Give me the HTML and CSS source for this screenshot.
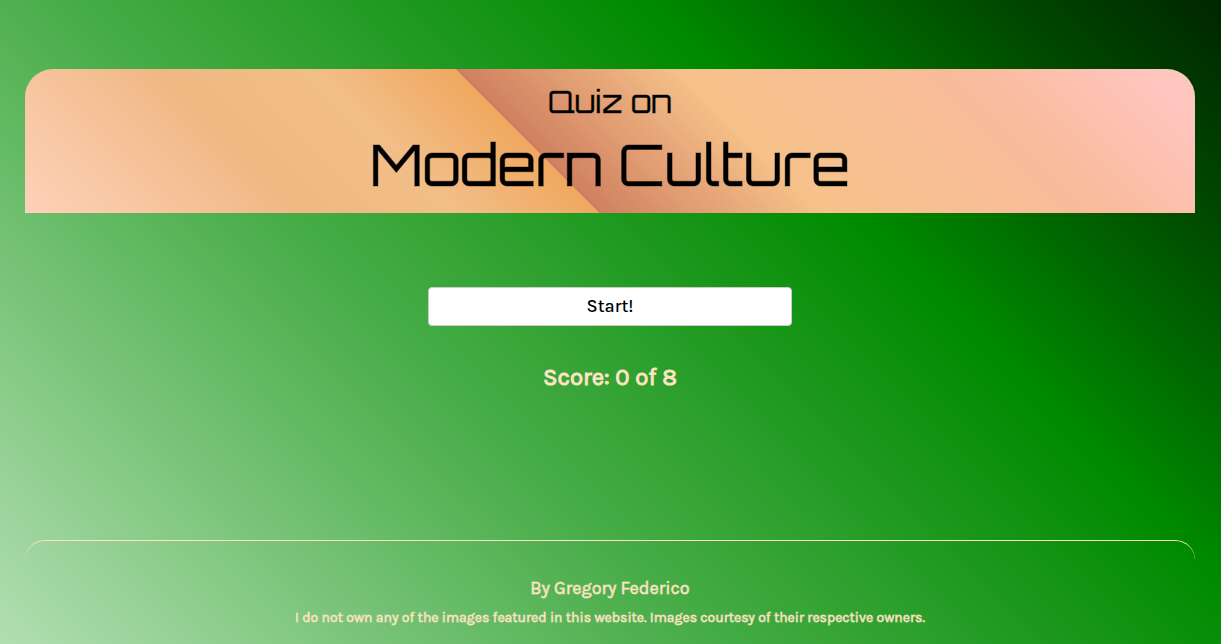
FILE: index.html
```html
<!DOCTYPE html>
<html lang="en">
<head>
<meta charset="utf-8">
<meta name="viewport" content="width=device-width, initial-scale=1">
<title>Quiz on Modern Culture</title>
<link rel="stylesheet" href="styles.css">
</head>
<body class="page">
<header class="banner">
<h1 class="title"><span class="title-lead">Quiz on</span><span class="title-main">Modern Culture</span></h1>
</header>
<main class="quiz">
<button class="start" type="button">Start!</button>
<p class="score">Score: 0 of 8</p>
</main>
<footer class="credits">
<p class="author">By Gregory Federico</p>
<p class="notice">I do not own any of the images featured in this website. Images courtesy of their respective owners.</p>
</footer>
</body>
</html>
```
FILE: styles.css
```css
* {
  box-sizing: border-box;
}

.page {
  display: flex;
  flex-direction: column;
  min-height: 100vh;
  margin: 0;
  padding: 69px 26px 16px 25px;
  background: linear-gradient(45deg, #b2deb2 0%, #4caf4c 36%, #008a00 69%, #004800 88%, #002600 100%);
  color: bisque;
  font-family: Karla, "Liberation Sans", sans-serif;
  font-weight: 400;
  text-align: center;
}

.banner {
  padding: 15px 16px 10px;
  border-radius: 28px 28px 0 0;
  background: linear-gradient(45deg, #ffd1ba 0%, #efb883 21%, #f2be87 33%, #f0a860 43.7%, #d08060 43.7%, #f6c28a 61%, #f9bb9c 82%, #ffc5bf 96%);
  color: #000;
}

.title {
  display: flex;
  flex-direction: column;
  gap: 6px;
  margin: 0;
  font-family: Orbitron, "DejaVu Sans", sans-serif;
  font-weight: 400;
  -webkit-text-stroke: 1px rgb(0 0 0 / 40%);
}

.title-lead {
  font-size: 30px;
  line-height: 36px;
}

.title-main {
  font-size: 56px;
  line-height: 77px;
}

.quiz {
  display: flex;
  flex: 1;
  flex-direction: column;
  align-items: center;
  padding: 74px 0 32px;
}

.start {
  width: 100%;
  max-width: 364px;
  padding: 6px 12px 7px;
  border: 1px solid #ccc;
  border-radius: 4px;
  background: #fff;
  color: #000;
  font-family: inherit;
  font-size: 18px;
  font-weight: 500;
  line-height: 24px;
}

.score {
  margin: 35px 0 0;
  font-size: 24px;
  line-height: 32px;
  -webkit-text-stroke: 1px bisque;
}

.credits {
  padding-top: 35px;
  border-top: 1px solid bisque;
  border-radius: 20px 20px 0 0;
  -webkit-text-stroke: 1px rgb(255 228 196 / 60%);
}

.author {
  margin: 0;
  font-size: 18px;
  line-height: 24px;
}

.notice {
  margin: 8px 0 0;
  font-size: 14px;
  line-height: 20px;
}
```
